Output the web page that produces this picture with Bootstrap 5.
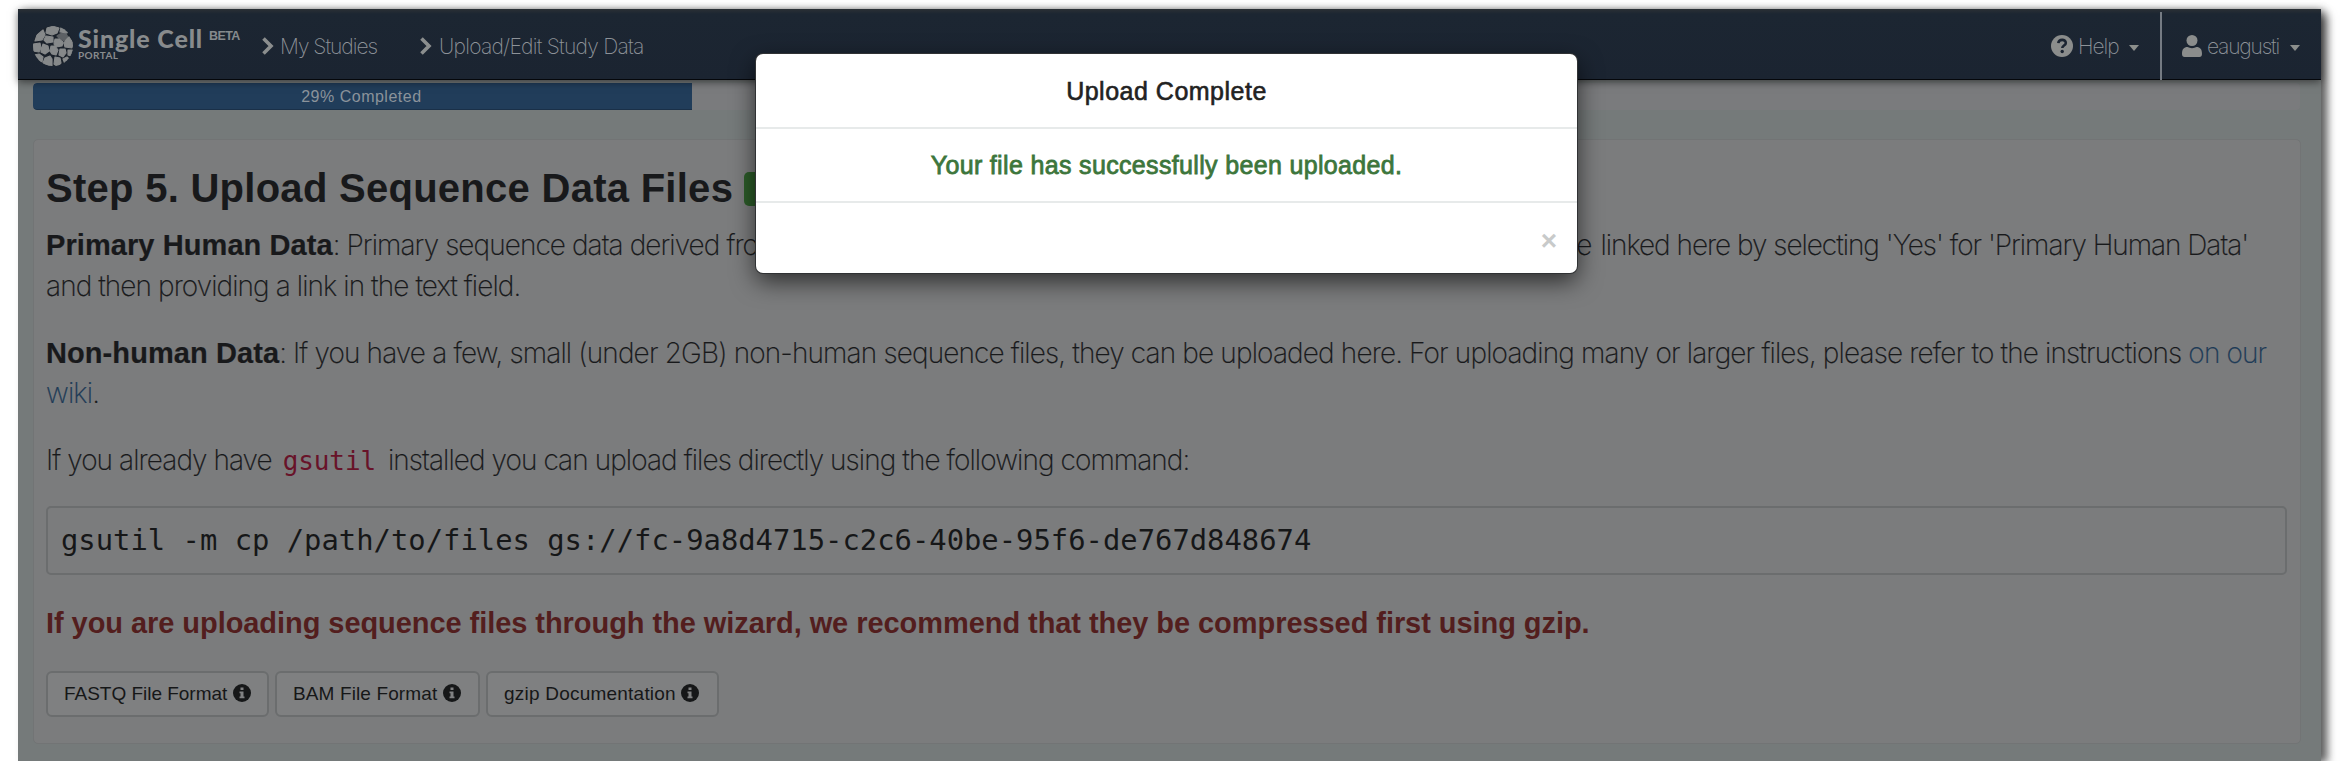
<!DOCTYPE html>
<html lang="en">
<head>
<meta charset="utf-8">
<title>Single Cell Portal</title>
<link href="https://cdn.jsdelivr.net/npm/bootstrap@5.3.0/dist/css/bootstrap.min.css" rel="stylesheet">
<style>
body{background:#fff;font-family:"Liberation Sans",sans-serif;color:#18191b;overflow:hidden}
.app{margin:9px 27px 0 18px;height:752px;background:#757a7a;box-shadow:8px 4px 9px -2px rgba(0,0,0,.55),5px 0 8px rgba(0,0,0,.22)}
.topbar{height:71px;padding:3px 0 0;background:linear-gradient(#2b3035 0,#1c2632 5px,#1b2431 100%);border-bottom:1px solid #05070b;box-shadow:0 2px 8px rgba(0,0,0,.5);color:#858a8d;flex-wrap:nowrap}
.brand{padding-left:15px;width:244px}
.brand-name{font:900 25px/25px Lato,sans-serif;color:#888b8d;width:136px;padding-left:5px;letter-spacing:.85px;white-space:nowrap;margin-top:-5px}
.brand-sub{font:700 10px/9px Lato,sans-serif;letter-spacing:.4px;padding-left:5px;color:#888b8d}
.beta{font-size:12.5px;line-height:14px;font-weight:700;letter-spacing:-.6px;color:#858a8d;margin-top:-20px}
.thin{font-family:Inter,"Liberation Sans",sans-serif;font-weight:200}
.nav-text{font-size:21px;line-height:30px;white-space:nowrap;color:#8d9298;padding-top:2px}
.study{letter-spacing:-1px;width:138px;padding-left:6px}
.uploads{letter-spacing:-.75px;padding-left:7px}
.help-text{letter-spacing:-1px;padding-left:5px;width:56px}
.user-text{letter-spacing:-1.2px;padding-left:5px;width:88px}
.tri{width:0;height:0;border:5.5px solid transparent;border-top:6px solid #8c8f8c;border-bottom:0;margin-top:5px}
.help-item{width:111px;height:68px;border-right:2px solid #757b83}
.user-item{padding-left:20px;width:159px}
.steps{height:27px;margin:3px 21px 0 15px;background:#7a7b7d;border-radius:4px}
.steps .progress-bar{background:#213d5a;border-bottom:1px solid #1a3048;color:#8b939b;font-size:16px;letter-spacing:.5px;border-radius:4px 0 0 4px;padding:2px 2px 0 0}
.panel-box{margin:29px 20px 0 15px;height:605px;background:#7b7c7d;border:1px solid #727475;border-radius:5px;padding:0 13px 0 12px}
.panel-box h3{font-size:40px;font-weight:700;letter-spacing:.27px;line-height:44px;margin:26px 0 0}
.done{width:80px;height:34px;border-radius:5px;background:#2c5c29;margin:0 0 0 11px}
.body-copy{font-size:28px;line-height:40.5px;letter-spacing:-.92px;white-space:nowrap;-webkit-text-stroke:.2px #1b1c1e;margin:26.5px 0 0}
.body-copy.first{margin-top:15px}
.body-copy.wide-run{letter-spacing:-.85px}
.body-copy b{font-family:"Liberation Sans",sans-serif;font-weight:700;font-size:29px;letter-spacing:.08px}
.humans{width:1245px;margin-right:9px;vertical-align:top}
.linked{letter-spacing:-1.02px}
.body-copy a{color:#1e3b57;text-decoration:none;-webkit-text-stroke-color:#1e3b57}
.body-copy code{font:26px/30px "DejaVu Sans Mono",monospace;color:#681329;letter-spacing:-.1px;padding:0 5px 0 4px;-webkit-text-stroke:0}
.cmd{height:69px;margin:25.500px 0 0;border:2px solid #6b6d6e;border-radius:5px;padding:0 13px;font:28.85px/64px "DejaVu Sans Mono",monospace;color:#161718;overflow:hidden}
.warn{font-size:29px;line-height:40px;font-weight:700;letter-spacing:-.06px;color:#531e1e;white-space:nowrap;margin-top:28px}
.docs{gap:6px;margin-top:28px}
.doc{height:46px;border:2px solid #6b6d6e;border-radius:6px;background:#7f8081;color:#161718;font-size:19px;padding:1px 0 0 16px;letter-spacing:-.02px;text-align:left;white-space:nowrap}
.doc svg{margin-top:-4px}
.doc-fastq{width:223px}
.doc-bam{width:205px;letter-spacing:.12px}
.doc-gzip{width:233px;letter-spacing:.22px}
.notice{position:absolute;left:756px;top:54px;width:821px;height:219px;background:#fff;border-radius:7px;box-shadow:0 0 0 1px #303234,0 8px 24px rgba(0,0,0,.65);font-size:25px;z-index:5}
.notice>div{height:74px;border-bottom:2px solid #e7eaea;padding-top:2px}
.notice>div:last-child{border:0;height:70px}
.notice>.ttl{height:75px;color:#222;letter-spacing:.5px;-webkit-text-stroke:.6px #222}
.ok{color:#3d763c;letter-spacing:.34px;-webkit-text-stroke:.8px #3d763c}
.notice>.x{font-size:28px;font-weight:700;color:#c8caca;padding:5px 20px 0 0}
</style>
</head>
<body>
<div class="app d-flex flex-column">
<nav class="navbar topbar d-flex align-items-center flex-shrink-0">
<div class="brand d-flex align-items-center">
<svg width="40" height="40" viewBox="0 0 40 40"><defs><clipPath id="ball"><circle cx="20" cy="20" r="20"/></clipPath></defs><g clip-path="url(#ball)"><rect width="40" height="40" fill="#1b222b"/><g fill="#86898a" stroke="#86898a" stroke-width="1.2" stroke-linejoin="round"><path d="M14 2l6-2 6 2-2 5-5 2-6-2z"/><path d="M27 8l5-2 3 5-3 4-5-2-3-3z" fill="#5d6165" stroke="#5d6165"/><path d="M4 9l6-5 2 5-3 5-7 1zM28 1l7 4-1 2-7-1z"/><path d="M13 10l7 1 0 5-6 1-3-3zM22 13l4 0 4 3-1 4-6 1-2-3zM33 14l3-3 4 6-1 5-7-1-1-4z"/><path d="M0 18l7-1 1 5-2 4-6-1zM10 18l5 2 1 5-4 3-4-2zM18 20l4 0 3 4-2 5-4-1-2-3zM27 23l5 0 1 4-3 4-4-2zM35 24l5 0-2 6-3-1z"/><path d="M1 29l5-1 4 3-1 5-5-1zM12 32l5-2 2 3 0 7-7-1-2-2zM22 31l5 1 1 5-3 4-4-3zM30 33l4-2 2 2-4 5z"/></g></g></svg>
<div><div class="brand-name">Single Cell</div><div class="brand-sub">PORTAL</div></div>
<div class="beta">BETA</div>
</div>
<svg width="12" height="18" viewBox="0 0 12 18" fill="none" stroke="#8b8e8e" stroke-width="3.6"><path d="M1.5 1.5L9 9l-7.5 7.5"/></svg>
<span class="nav-text thin study">My Studies</span>
<svg class="ms-2" width="12" height="18" viewBox="0 0 12 18" fill="none" stroke="#8b8e8e" stroke-width="3.6"><path d="M1.5 1.5L9 9l-7.5 7.5"/></svg>
<span class="nav-text thin uploads">Upload/Edit Study Data</span>
<div class="help-item d-flex align-items-center ms-auto">
<svg width="22" height="22" viewBox="0 0 22 22"><circle cx="11" cy="11" r="11" fill="#8b8d8c"/><path d="M7.3 8.2c.5-4.500 7.500-4.300 7.500-.3 0 2.600-3.500 2.600-3.500 5" fill="none" stroke="#1b2431" stroke-width="2.6"/><circle cx="11.200" cy="16.500" r="1.700" fill="#1b2431"/></svg>
<span class="nav-text thin help-text">Help</span><i class="tri"></i>
</div>
<div class="user-item d-flex align-items-center">
<svg width="20" height="22" viewBox="0 0 20 22" fill="#8b8d8c"><circle cx="10" cy="5.500" r="5.500"/><path d="M0 19c0-5 2-7 5.500-7 2.500 1.500 6.500 1.500 9 0 3.500 0 5.500 2 5.500 7 0 2-1 3-2.500 3h-15C1 22 0 21 0 19z"/></svg>
<span class="nav-text thin user-text">eaugusti</span><i class="tri"></i>
</div>
</nav>
<div class="progress steps flex-shrink-0"><div class="progress-bar" style="width:29.06%">29% Completed</div></div>
<main class="panel-box">
<div class="d-flex align-items-end"><h3>Step 5. Upload Sequence Data Files</h3><span class="done mb-1"></span></div>
<p class="body-copy thin first"><b>Primary Human Data</b>: <span class="humans d-inline-flex justify-content-between"><span>Primary sequence data derived from humans should be stored in other biological databases and can</span><span>be</span></span><span class="linked">linked here by selecting 'Yes' for 'Primary Human Data'</span><br>and then providing a link in the text field.</p>
<p class="body-copy thin wide-run"><b>Non-human Data</b>: If you have a few, small (under 2GB) non-human sequence files, they can be uploaded here. For uploading many or larger files, please refer to the instructions <a href="#">on our<br>wiki</a>.</p>
<p class="body-copy thin">If you already have <code>gsutil</code> installed you can upload files directly using the following command:</p>
<pre class="cmd">gsutil -m cp /path/to/files gs://fc-9a8d4715-c2c6-40be-95f6-de767d848674</pre>
<div class="warn">If you are uploading sequence files through the wizard, we recommend that they be compressed first using gzip.</div>
<div class="docs d-flex">
<button class="btn doc doc-fastq">FASTQ File Format <svg width="18" height="18" viewBox="0 0 18 18"><circle cx="9" cy="9" r="9" fill="#161718"/><path d="M7.500 3.500h3v2.500h-3zM6.500 7.500h4v5h1v1.800h-5v-1.800h1v-3.200h-1z" fill="#808182"/></svg></button>
<button class="btn doc doc-bam">BAM File Format <svg width="18" height="18" viewBox="0 0 18 18"><circle cx="9" cy="9" r="9" fill="#161718"/><path d="M7.500 3.500h3v2.500h-3zM6.500 7.500h4v5h1v1.800h-5v-1.800h1v-3.200h-1z" fill="#808182"/></svg></button>
<button class="btn doc doc-gzip">gzip Documentation <svg width="18" height="18" viewBox="0 0 18 18"><circle cx="9" cy="9" r="9" fill="#161718"/><path d="M7.500 3.500h3v2.500h-3zM6.500 7.500h4v5h1v1.800h-5v-1.800h1v-3.200h-1z" fill="#808182"/></svg></button>
</div>
</main>
</div>
<div class="notice">
<div class="ttl d-flex align-items-center justify-content-center">Upload Complete</div>
<div class="ok d-flex align-items-center justify-content-center">Your file has successfully been uploaded.</div>
<div class="x d-flex align-items-center justify-content-end">×</div>
</div>
</body>
</html>
